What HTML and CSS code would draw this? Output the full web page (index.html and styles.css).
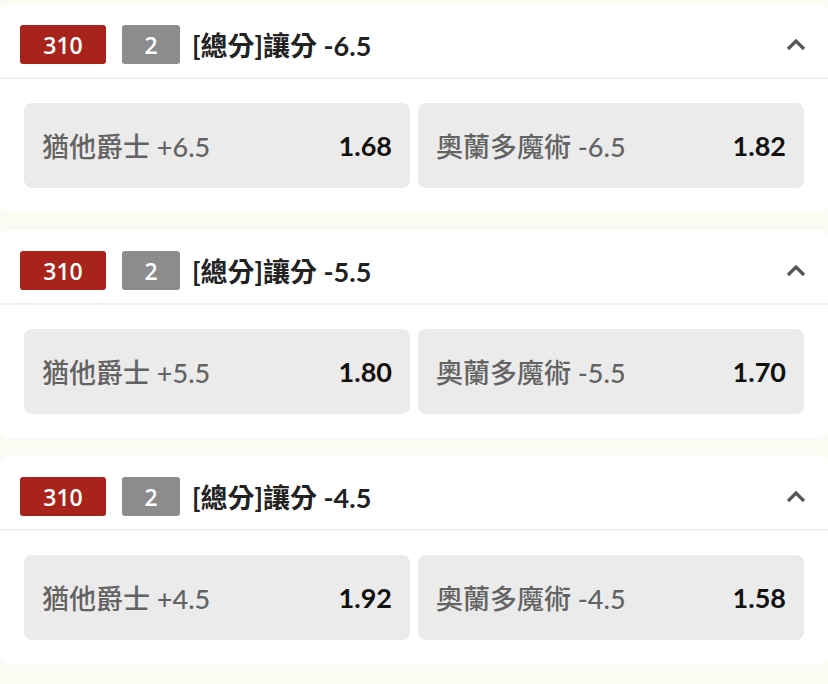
FILE: index.html
```html
<!DOCTYPE html>
<html lang="zh-Hant">
<head>
<meta charset="utf-8">
<link rel="stylesheet" href="styles.css">
</head>
<body>
<div class="list">
  <section class="card">
    <div class="head">
      <span class="badge red">310</span>
      <span class="badge gray">2</span>
      <span class="title">[總分]讓分 -6.5</span>
      <svg class="chev" width="20" height="14" viewBox="0 0 20 14"><path d="M2 11 L10 3 L18 11" fill="none" stroke="#555" stroke-width="3.2"/></svg>
    </div>
    <div class="body">
      <div class="odd"><span class="name">猶他爵士 +6.5</span><span class="price">1.68</span></div>
      <div class="odd"><span class="name">奧蘭多魔術 -6.5</span><span class="price">1.82</span></div>
    </div>
  </section>
  <section class="card">
    <div class="head">
      <span class="badge red">310</span>
      <span class="badge gray">2</span>
      <span class="title">[總分]讓分 -5.5</span>
      <svg class="chev" width="20" height="14" viewBox="0 0 20 14"><path d="M2 11 L10 3 L18 11" fill="none" stroke="#555" stroke-width="3.2"/></svg>
    </div>
    <div class="body">
      <div class="odd"><span class="name">猶他爵士 +5.5</span><span class="price">1.80</span></div>
      <div class="odd"><span class="name">奧蘭多魔術 -5.5</span><span class="price">1.70</span></div>
    </div>
  </section>
  <section class="card">
    <div class="head">
      <span class="badge red">310</span>
      <span class="badge gray">2</span>
      <span class="title">[總分]讓分 -4.5</span>
      <svg class="chev" width="20" height="14" viewBox="0 0 20 14"><path d="M2 11 L10 3 L18 11" fill="none" stroke="#555" stroke-width="3.2"/></svg>
    </div>
    <div class="body">
      <div class="odd"><span class="name">猶他爵士 +4.5</span><span class="price">1.92</span></div>
      <div class="odd"><span class="name">奧蘭多魔術 -4.5</span><span class="price">1.58</span></div>
    </div>
  </section>
</div>
</body>
</html>
```

FILE: styles.css
```css
html, body {
  margin: 0;
  padding: 0;
  background: #fcfbf3;
}
body {
  font-family: Lato, "Noto Sans CJK TC", sans-serif;
}
.list {
  display: flex;
  flex-direction: column;
  gap: 18px;
  padding-top: 4px;
}
.card {
  background: #fff;
  border-radius: 8px;
  height: 208px;
  display: flex;
  flex-direction: column;
}
.head {
  height: 75px;
  box-sizing: border-box;
  border-bottom: 2px solid #efefef;
  display: flex;
  align-items: center;
  padding: 8px 22px 0 20px;
}
.badge {
  height: 39px;
  border-radius: 3px;
  color: #fff;
  font-family: "Open Sans", "Noto Sans", sans-serif;
  font-size: 23px;
  font-weight: 600;
  display: flex;
  align-items: center;
  justify-content: center;
}
.red {
  width: 86px;
  background: #a8231b;
  margin-right: 16px;
}
.gray {
  width: 58px;
  background: #8c8c8c;
  margin-right: 12px;
}
.title {
  font-size: 27px;
  font-weight: 700;
  color: #222;
  flex: 1;
}
.title, .name {
  font-family: Lato, "Noto Sans CJK TC", sans-serif;
}
.chev {
  display: block;
}
.body {
  display: grid;
  grid-template-columns: 1fr 1fr;
  gap: 8px;
  padding: 24px 24px 0 24px;
}
.odd {
  height: 85px;
  background: #ebebeb;
  border-radius: 8px;
  display: flex;
  align-items: center;
  justify-content: space-between;
  padding: 0 18px;
}
.name {
  font-size: 27px;
  font-weight: 500;
  color: #636363;
}
.price {
  font-size: 27px;
  font-weight: 700;
  color: #111;
}
```
